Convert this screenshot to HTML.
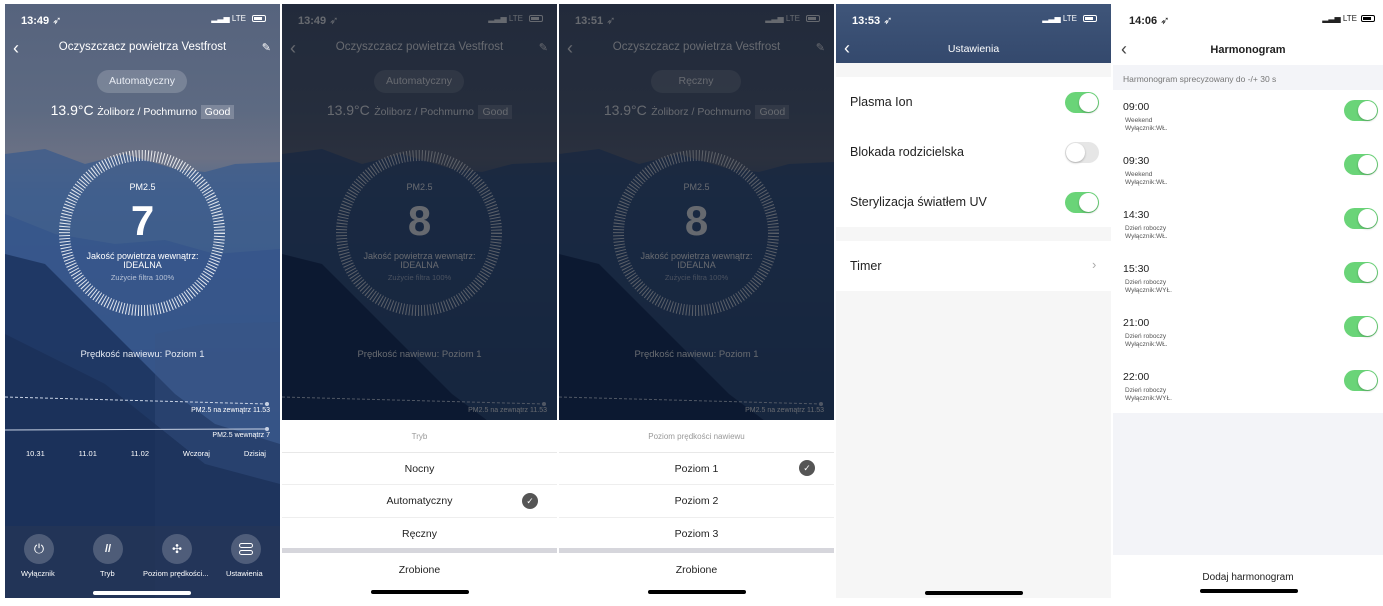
<!DOCTYPE html>
<html><head><meta charset="utf-8"><style>
*{margin:0;padding:0;box-sizing:border-box}
body{width:1383px;height:606px;background:#fff;position:relative;overflow:hidden;font-family:"Liberation Sans","DejaVu Sans",sans-serif}
.p{position:absolute;top:4px;width:275px;height:594px;overflow:hidden}
.a{position:absolute;white-space:nowrap}
.c{position:absolute;left:0;width:100%;text-align:center;white-space:nowrap}
.bg{position:absolute;left:0;top:0;width:275px;height:594px;background:linear-gradient(180deg,#56637d 0%,#5d6a82 18%,#6b7184 26%,#4f6a90 32%,#3f5f8b 45%,#2e4c7a 60%,#233f6a 75%,#1d355e 100%)}
.st{font-size:11px;font-weight:bold;top:10px;left:16px}
.tog{position:absolute;width:34px;height:21px;border-radius:11px;background:#6ad478}
.tog::after{content:"";position:absolute;right:1px;top:1px;width:19px;height:19px;border-radius:50%;background:#fff;box-shadow:0 1px 2px rgba(0,0,0,.25)}
.tog.off{background:#e6e6e6}
.tog.off::after{left:1px;right:auto}
.home{position:absolute;width:98px;height:4px;border-radius:2px;background:#000;left:89px;top:586px}
.bat{position:absolute;top:11px;width:14px;height:7px;border:1px solid currentColor;border-radius:2px}
.bat::after{content:"";position:absolute;left:1px;top:1px;width:8px;height:3px;background:currentColor}
</style></head><body>

<!-- Panel template 1 -->
<div class="p" style="left:5px;color:#fff">
 <div class="bg"></div>
 <svg class="a" style="left:0;top:0" width="275" height="594">
  <path d="M0 150 L40 145 L80 160 L120 150 L170 165 L200 168 L230 160 L275 158 L275 594 L0 594Z" fill="#3d5c8c" opacity=".8"/>
  <path d="M0 210 L50 230 L110 240 L160 236 L210 250 L275 245 L275 594 L0 594Z" fill="#35548a" opacity=".7"/>
  <path d="M0 250 L40 260 L80 300 L130 350 L170 390 L210 420 L275 440 L275 594 L0 594Z" fill="#1d3560" opacity=".9"/>
  <path d="M150 330 L200 320 L275 318 L275 594 L150 594Z" fill="#3a5482" opacity=".35"/>
  <path d="M0 330 L60 360 L100 380 L150 420 L200 460 L275 480 L275 594 L0 594Z" fill="#1a2f55" opacity=".7"/>
  <circle cx="137" cy="229" r="77.5" fill="none" stroke="#fff" stroke-opacity=".85" stroke-width="11" stroke-dasharray="1 2.04"/>
  <line x1="0" y1="393" x2="262" y2="400" stroke="#c8d2e4" stroke-width="1" stroke-dasharray="3 2"/>
  <circle cx="262" cy="400" r="2" fill="#c8d2e4"/>
  <line x1="0" y1="426" x2="262" y2="425" stroke="#c8d2e4" stroke-width="1"/>
  <circle cx="262" cy="425" r="2" fill="#c8d2e4"/>
 </svg>
 <div class="a st">13:49 ➶</div>
 <div class="a" style="right:34px;top:10px;font-size:8px">▂▃▅ LTE</div><div class="bat" style="right:14px"></div>
 <div class="a" style="left:8px;top:34px;font-size:18px">‹</div>
 <div class="c" style="top:37px;font-size:11.5px">Oczyszczacz powietrza Vestfrost</div>
 <div class="a" style="right:9px;top:37px;font-size:11px">✎</div>
 <div class="a" style="left:92px;top:66px;width:90px;height:23px;border-radius:12px;background:rgba(255,255,255,.18);text-align:center;line-height:23px;font-size:10.5px;color:#e8ecf3">Automatyczny</div>
 <div class="c" style="top:98px;font-size:13px"><span style="font-size:14px">13.9°C</span> <span style="font-size:10.5px">Żoliborz / Pochmurno</span> <span style="font-size:10.5px;background:rgba(255,255,255,.2);padding:1px 4px">Good</span></div>
 <div class="c" style="top:178px;font-size:9px;left:0">PM2.5</div>
 <div class="c" style="top:193px;font-size:42px;font-weight:bold">7</div>
 <div class="c" style="top:247px;font-size:9px">Jakość powietrza wewnątrz:</div>
 <div class="c" style="top:256px;font-size:9px">IDEALNA</div>
 <div class="c" style="top:269px;font-size:7.5px;color:#b8c3d6">Zużycie filtra 100%</div>
 <div class="c" style="top:345px;font-size:9.5px;color:#e6ebf3">Prędkość nawiewu: Poziom 1</div>
 <div class="a" style="right:10px;top:403px;font-size:7px">PM2.5 na zewnątrz 11.53</div>
 <div class="a" style="right:10px;top:428px;font-size:7px">PM2.5 wewnątrz 7</div>
 <div class="a" style="left:21px;top:445px;font-size:7.5px;word-spacing:0;width:240px;display:flex;justify-content:space-between"><span>10.31</span><span>11.01</span><span>11.02</span><span>Wczoraj</span><span>Dzisiaj</span></div>
 <div class="a" style="left:0;top:522px;width:275px;height:72px;background:rgba(40,55,85,.55)"></div>
 <div class="a" style="left:19px;top:530px;width:30px;height:30px;border-radius:50%;background:rgba(255,255,255,.2);text-align:center;line-height:30px;font-size:13px">⏻</div>
 <div class="a" style="left:88px;top:530px;width:30px;height:30px;border-radius:50%;background:rgba(255,255,255,.2);text-align:center;line-height:30px;font-size:11px;font-weight:bold">//</div>
 <div class="a" style="left:157px;top:530px;width:30px;height:30px;border-radius:50%;background:rgba(255,255,255,.2);text-align:center;line-height:30px;font-size:12px">✣</div>
 <div class="a" style="left:226px;top:530px;width:30px;height:30px;border-radius:50%;background:rgba(255,255,255,.2)"><div class="a" style="left:8px;top:9px;width:14px;height:5px;border:1.3px solid #fff;border-radius:3px"></div><div class="a" style="left:8px;top:16px;width:14px;height:5px;border:1.3px solid #fff;border-radius:3px"></div></div>
 <div class="a" style="left:16px;top:565px;font-size:7.5px">Wyłącznik</div>
 <div class="a" style="left:95px;top:565px;font-size:7.5px">Tryb</div>
 <div class="a" style="left:138px;top:565px;font-size:7.5px">Poziom prędkości...</div>
 <div class="a" style="left:221px;top:565px;font-size:7.5px">Ustawienia</div>
 <div class="home" style="background:#fff;left:88px;top:587px"></div>
</div>

<!-- Panel 2 -->
<div class="p" style="left:282px;color:#fff">
 <div class="bg"></div>
 <svg class="a" style="left:0;top:0" width="275" height="594">
  <path d="M0 150 L40 145 L80 160 L120 150 L170 165 L200 168 L230 160 L275 158 L275 594 L0 594Z" fill="#3d5c8c" opacity=".8"/>
  <path d="M0 250 L40 260 L80 300 L130 350 L170 390 L210 420 L275 440 L275 594 L0 594Z" fill="#1d3560" opacity=".9"/>
  <circle cx="137" cy="229" r="77.5" fill="none" stroke="#fff" stroke-opacity=".85" stroke-width="11" stroke-dasharray="1 2.04"/>
  <line x1="0" y1="393" x2="262" y2="400" stroke="#c8d2e4" stroke-dasharray="3 2"/>
  <circle cx="262" cy="400" r="2" fill="#c8d2e4"/>
 </svg>
 <div class="a st">13:49 ➶</div>
 <div class="a" style="right:34px;top:10px;font-size:8px">▂▃▅ LTE</div><div class="bat" style="right:14px"></div>
 <div class="a" style="left:8px;top:34px;font-size:18px">‹</div>
 <div class="c" style="top:37px;font-size:11.5px">Oczyszczacz powietrza Vestfrost</div>
 <div class="a" style="right:9px;top:37px;font-size:11px">✎</div>
 <div class="a" style="left:92px;top:66px;width:90px;height:23px;border-radius:12px;background:rgba(255,255,255,.18);text-align:center;line-height:23px;font-size:10.5px">Automatyczny</div>
 <div class="c" style="top:98px"><span style="font-size:14px">13.9°C</span> <span style="font-size:10.5px">Żoliborz / Pochmurno</span> <span style="font-size:10.5px;background:rgba(255,255,255,.2);padding:1px 4px">Good</span></div>
 <div class="c" style="top:178px;font-size:9px">PM2.5</div>
 <div class="c" style="top:193px;font-size:42px;font-weight:bold">8</div>
 <div class="c" style="top:247px;font-size:9px">Jakość powietrza wewnątrz:</div>
 <div class="c" style="top:256px;font-size:9px">IDEALNA</div>
 <div class="c" style="top:269px;font-size:7.5px;color:#b8c3d6">Zużycie filtra 100%</div>
 <div class="c" style="top:345px;font-size:9.5px">Prędkość nawiewu: Poziom 1</div>
 <div class="a" style="right:10px;top:403px;font-size:7px">PM2.5 na zewnątrz 11.53</div>
 <div class="a" style="left:0;top:0;width:275px;height:416px;background:rgba(0,5,15,.6)"></div>
 <div class="a" style="left:0;top:416px;width:275px;height:178px;background:#fff;color:#222">
  <div class="c" style="top:12px;font-size:8px;color:#999">Tryb</div>
  <div class="a" style="left:0;top:32px;width:275px;height:1px;background:#e8e8e8"></div>
  <div class="c" style="top:43px;font-size:10.5px">Nocny</div>
  <div class="a" style="left:0;top:64px;width:275px;height:1px;background:#eee"></div>
  <div class="c" style="top:75px;font-size:10.5px">Automatyczny</div>
  <div class="a" style="left:240px;top:73px;width:16px;height:16px;border-radius:50%;background:#555;color:#fff;font-size:9px;text-align:center;line-height:16px">✓</div>
  <div class="a" style="left:0;top:97px;width:275px;height:1px;background:#eee"></div>
  <div class="c" style="top:108px;font-size:10.5px">Ręczny</div>
  <div class="a" style="left:0;top:128px;width:275px;height:5px;background:#d6d6dc"></div>
  <div class="c" style="top:144px;font-size:10.5px">Zrobione</div>
 </div>
 <div class="home" style="top:586px"></div>
</div>

<!-- Panel 3 -->
<div class="p" style="left:559px;color:#fff">
 <div class="bg"></div>
 <svg class="a" style="left:0;top:0" width="275" height="594">
  <path d="M0 150 L40 145 L80 160 L120 150 L170 165 L200 168 L230 160 L275 158 L275 594 L0 594Z" fill="#3d5c8c" opacity=".8"/>
  <path d="M0 250 L40 260 L80 300 L130 350 L170 390 L210 420 L275 440 L275 594 L0 594Z" fill="#1d3560" opacity=".9"/>
  <circle cx="137" cy="229" r="77.5" fill="none" stroke="#fff" stroke-opacity=".85" stroke-width="11" stroke-dasharray="1 2.04"/>
  <line x1="0" y1="393" x2="262" y2="400" stroke="#c8d2e4" stroke-dasharray="3 2"/>
  <circle cx="262" cy="400" r="2" fill="#c8d2e4"/>
 </svg>
 <div class="a st">13:51 ➶</div>
 <div class="a" style="right:34px;top:10px;font-size:8px">▂▃▅ LTE</div><div class="bat" style="right:14px"></div>
 <div class="a" style="left:8px;top:34px;font-size:18px">‹</div>
 <div class="c" style="top:37px;font-size:11.5px">Oczyszczacz powietrza Vestfrost</div>
 <div class="a" style="right:9px;top:37px;font-size:11px">✎</div>
 <div class="a" style="left:92px;top:66px;width:90px;height:23px;border-radius:12px;background:rgba(255,255,255,.18);text-align:center;line-height:23px;font-size:10.5px">Ręczny</div>
 <div class="c" style="top:98px"><span style="font-size:14px">13.9°C</span> <span style="font-size:10.5px">Żoliborz / Pochmurno</span> <span style="font-size:10.5px;background:rgba(255,255,255,.2);padding:1px 4px">Good</span></div>
 <div class="c" style="top:178px;font-size:9px">PM2.5</div>
 <div class="c" style="top:193px;font-size:42px;font-weight:bold">8</div>
 <div class="c" style="top:247px;font-size:9px">Jakość powietrza wewnątrz:</div>
 <div class="c" style="top:256px;font-size:9px">IDEALNA</div>
 <div class="c" style="top:269px;font-size:7.5px;color:#b8c3d6">Zużycie filtra 100%</div>
 <div class="c" style="top:345px;font-size:9.5px">Prędkość nawiewu: Poziom 1</div>
 <div class="a" style="right:10px;top:403px;font-size:7px">PM2.5 na zewnątrz 11.53</div>
 <div class="a" style="left:0;top:0;width:275px;height:416px;background:rgba(0,5,15,.6)"></div>
 <div class="a" style="left:0;top:416px;width:275px;height:178px;background:#fff;color:#222">
  <div class="c" style="top:12px;font-size:8px;color:#999">Poziom prędkości nawiewu</div>
  <div class="a" style="left:0;top:32px;width:275px;height:1px;background:#e8e8e8"></div>
  <div class="c" style="top:43px;font-size:10.5px">Poziom 1</div>
  <div class="a" style="left:240px;top:40px;width:16px;height:16px;border-radius:50%;background:#555;color:#fff;font-size:9px;text-align:center;line-height:16px">✓</div>
  <div class="a" style="left:0;top:64px;width:275px;height:1px;background:#eee"></div>
  <div class="c" style="top:75px;font-size:10.5px">Poziom 2</div>
  <div class="a" style="left:0;top:97px;width:275px;height:1px;background:#eee"></div>
  <div class="c" style="top:108px;font-size:10.5px">Poziom 3</div>
  <div class="a" style="left:0;top:128px;width:275px;height:5px;background:#d6d6dc"></div>
  <div class="c" style="top:144px;font-size:10.5px">Zrobione</div>
 </div>
 <div class="home" style="top:586px"></div>
</div>

<!-- Panel 4 -->
<div class="p" style="left:836px;background:#f6f6f6;color:#222">
 <div class="a" style="left:0;top:0;width:275px;height:59px;background:linear-gradient(180deg,#3f5579,#34496d);color:#fff">
  <div class="a st">13:53 ➶</div>
  <div class="a" style="right:34px;top:10px;font-size:8px">▂▃▅ LTE</div><div class="bat" style="right:14px"></div>
  <div class="a" style="left:8px;top:34px;font-size:18px">‹</div>
  <div class="c" style="top:39px;font-size:10.5px">Ustawienia</div>
 </div>
 <div class="a" style="left:0;top:73px;width:275px;height:150px;background:#fff"></div>
 <div class="a" style="left:14px;top:91px;font-size:12.5px">Plasma Ion</div>
 <div class="tog" style="left:229px;top:88px"></div>
 <div class="a" style="left:14px;top:141px;font-size:12.5px">Blokada rodzicielska</div>
 <div class="tog off" style="left:229px;top:138px"></div>
 <div class="a" style="left:14px;top:191px;font-size:12.5px">Sterylizacja światłem UV</div>
 <div class="tog" style="left:229px;top:188px"></div>
 <div class="a" style="left:0;top:237px;width:275px;height:50px;background:#fff"></div>
 <div class="a" style="left:14px;top:255px;font-size:12.5px">Timer</div>
 <div class="a" style="left:256px;top:253px;font-size:13px;color:#aaa">›</div>
 <div class="home" style="top:587px"></div>
</div>

<!-- Panel 5 -->
<div class="p" style="left:1113px;width:270px;background:#f3f4f8;color:#222">
 <div class="a" style="left:0;top:0;width:270px;height:61px;background:#fff">
  <div class="a st">14:06 ➶</div>
  <div class="a" style="right:26px;top:10px;font-size:8px">▂▃▅ LTE</div><div class="bat" style="right:8px;color:#000"></div>
  <div class="a" style="left:8px;top:35px;font-size:18px;color:#444">‹</div>
  <div class="c" style="top:40px;font-size:11px;font-weight:bold">Harmonogram</div>
 </div>
 <div class="a" style="left:10px;top:70px;font-size:8.5px;color:#777">Harmonogram sprecyzowany do -/+ 30 s</div>
 <div class="a" style="left:0;top:86px;width:270px;height:323px;background:#fff"></div>
 <div class="a" style="left:10px;top:97px;font-size:10.5px">09:00</div><div class="a" style="left:12px;top:113px;font-size:6.5px;line-height:8px;color:#555">Weekend<br>Wyłącznik:WŁ.</div><div class="tog" style="left:231px;top:96px"></div>
 <div class="a" style="left:10px;top:151px;font-size:10.5px">09:30</div><div class="a" style="left:12px;top:167px;font-size:6.5px;line-height:8px;color:#555">Weekend<br>Wyłącznik:WŁ.</div><div class="tog" style="left:231px;top:150px"></div>
 <div class="a" style="left:10px;top:205px;font-size:10.5px">14:30</div><div class="a" style="left:12px;top:221px;font-size:6.5px;line-height:8px;color:#555">Dzień roboczy<br>Wyłącznik:WŁ.</div><div class="tog" style="left:231px;top:204px"></div>
 <div class="a" style="left:10px;top:259px;font-size:10.5px">15:30</div><div class="a" style="left:12px;top:275px;font-size:6.5px;line-height:8px;color:#555">Dzień roboczy<br>Wyłącznik:WYŁ.</div><div class="tog" style="left:231px;top:258px"></div>
 <div class="a" style="left:10px;top:313px;font-size:10.5px">21:00</div><div class="a" style="left:12px;top:329px;font-size:6.5px;line-height:8px;color:#555">Dzień roboczy<br>Wyłącznik:WŁ.</div><div class="tog" style="left:231px;top:312px"></div>
 <div class="a" style="left:10px;top:367px;font-size:10.5px">22:00</div><div class="a" style="left:12px;top:383px;font-size:6.5px;line-height:8px;color:#555">Dzień roboczy<br>Wyłącznik:WYŁ.</div><div class="tog" style="left:231px;top:366px"></div>
 <div class="a" style="left:0;top:551px;width:270px;height:43px;background:#fff"></div>
 <div class="c" style="top:568px;font-size:10px">Dodaj harmonogram</div>
 <div class="home" style="left:87px;top:585px"></div>
</div>
</body></html>
